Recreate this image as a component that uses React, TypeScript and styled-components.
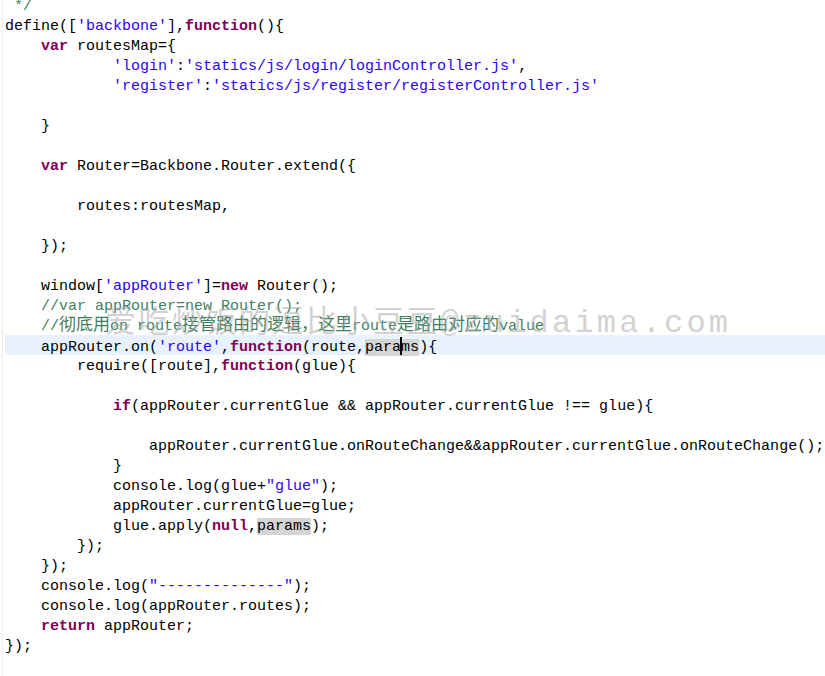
import React from "react";
import styled, { createGlobalStyle } from "styled-components";

const GlobalStyle = createGlobalStyle`
  html, body {
    margin: 0;
    padding: 0;
    background: #ffffff;
  }
`;

const Editor = styled.div`
  position: relative;
  display: flex;
  width: 825px;
  height: 676px;
  overflow: hidden;
  background: #ffffff;
`;

const Ruler = styled.div`
  flex: 0 0 2px;
  border-right: 1px solid #ececec;
`;

const Code = styled.div`
  flex: 1;
  margin-top: -5px;
  padding-left: 2px;
  overflow: hidden;
  font-family: "Liberation Mono", "DejaVu Sans Mono", monospace;
  font-size: 15px;
  color: #000000;
`;

const Line = styled.div<{ $current?: boolean }>`
  height: 18px;
  padding-top: 2px;
  line-height: 20px;
  white-space: pre;
  background: ${(p) => (p.$current ? "#e8f2fe" : "transparent")};
`;

const Kw = styled.span`
  color: #7f0055;
  font-weight: bold;
`;

const Str = styled.span`
  color: #2a00ff;
`;

const Cm = styled.span`
  color: #3f7f5f;
`;

const Cjk = styled.span`
  font-family: "Noto Sans CJK SC", sans-serif;
  font-size: 17px;
  line-height: 0;
`;

const Mark = styled.span`
  background: #d4d4d4;
`;

const Caret = styled.span`
  display: inline-block;
  width: 2px;
  height: 18px;
  margin: 0 -1px;
  vertical-align: -4px;
  background: #000000;
`;

const Watermark = styled.div`
  position: absolute;
  left: 105px;
  top: 299px;
  white-space: nowrap;
  pointer-events: none;
  color: rgba(165, 165, 165, 0.5);
  line-height: 40px;
`;

const WmCjk = styled.span`
  font-family: "Noto Sans CJK SC", sans-serif;
  font-size: 31px;
  letter-spacing: 2.5px;
`;

const WmLatin = styled.span`
  font-family: "Liberation Mono", monospace;
  font-size: 32px;
  letter-spacing: 3.2px;
`;

function App() {
  return (
    <>
      <GlobalStyle />
      <Editor>
        <Ruler />
        <Code>
          <Line>
            {" "}
            <Cm>*/</Cm>
          </Line>
          <Line>
            define([<Str>'backbone'</Str>],<Kw>function</Kw>(){"{"}
          </Line>
          <Line>
            {"    "}
            <Kw>var</Kw> routesMap={"{"}
          </Line>
          <Line>
            {"            "}
            <Str>'login'</Str>:<Str>'statics/js/login/loginController.js'</Str>,
          </Line>
          <Line>
            {"            "}
            <Str>'register'</Str>:
            <Str>'statics/js/register/registerController.js'</Str>
          </Line>
          <Line />
          <Line>{"    }"}</Line>
          <Line />
          <Line>
            {"    "}
            <Kw>var</Kw>
            {" Router=Backbone.Router.extend({"}
          </Line>
          <Line />
          <Line>{"        routes:routesMap,"}</Line>
          <Line />
          <Line>{"    });"}</Line>
          <Line />
          <Line>
            {"    window["}
            <Str>'appRouter'</Str>
            {"]="}
            <Kw>new</Kw>
            {" Router();"}
          </Line>
          <Line>
            {"    "}
            <Cm>//var appRouter=new Router();</Cm>
          </Line>
          <Line>
            {"    "}
            <Cm>
              //<Cjk>彻底用</Cjk>on route<Cjk>接管路由的逻辑，这里</Cjk>route
              <Cjk>是路由对应的</Cjk>value
            </Cm>
          </Line>
          <Line $current>
            {"    appRouter.on("}
            <Str>'route'</Str>,<Kw>function</Kw>(route,
            <Mark>
              para
              <Caret />
              ms
            </Mark>
            ){"{"}
          </Line>
          <Line>
            {"        require([route],"}
            <Kw>function</Kw>
            {"(glue){"}
          </Line>
          <Line />
          <Line>
            {"            "}
            <Kw>if</Kw>
            {"(appRouter.currentGlue && appRouter.currentGlue !== glue){"}
          </Line>
          <Line />
          <Line>
            {
              "                appRouter.currentGlue.onRouteChange&&appRouter.currentGlue.onRouteChange();"
            }
          </Line>
          <Line>{"            }"}</Line>
          <Line>
            {"            console.log(glue+"}
            <Str>"glue"</Str>
            {");"}
          </Line>
          <Line>{"            appRouter.currentGlue=glue;"}</Line>
          <Line>
            {"            glue.apply("}
            <Kw>null</Kw>,<Mark>params</Mark>
            {");"}
          </Line>
          <Line>{"        });"}</Line>
          <Line>{"    });"}</Line>
          <Line>
            {"    console.log("}
            <Str>"--------------"</Str>
            {");"}
          </Line>
          <Line>{"    console.log(appRouter.routes);"}</Line>
          <Line>
            {"    "}
            <Kw>return</Kw>
            {" appRouter;"}
          </Line>
          <Line>{"});"}</Line>
        </Code>
        <Watermark>
          <WmCjk>爱吃炒饭的逗比小豆豆</WmCjk>
          <WmLatin>@zuidaima.com</WmLatin>
        </Watermark>
      </Editor>
    </>
  );
}

export default App;
